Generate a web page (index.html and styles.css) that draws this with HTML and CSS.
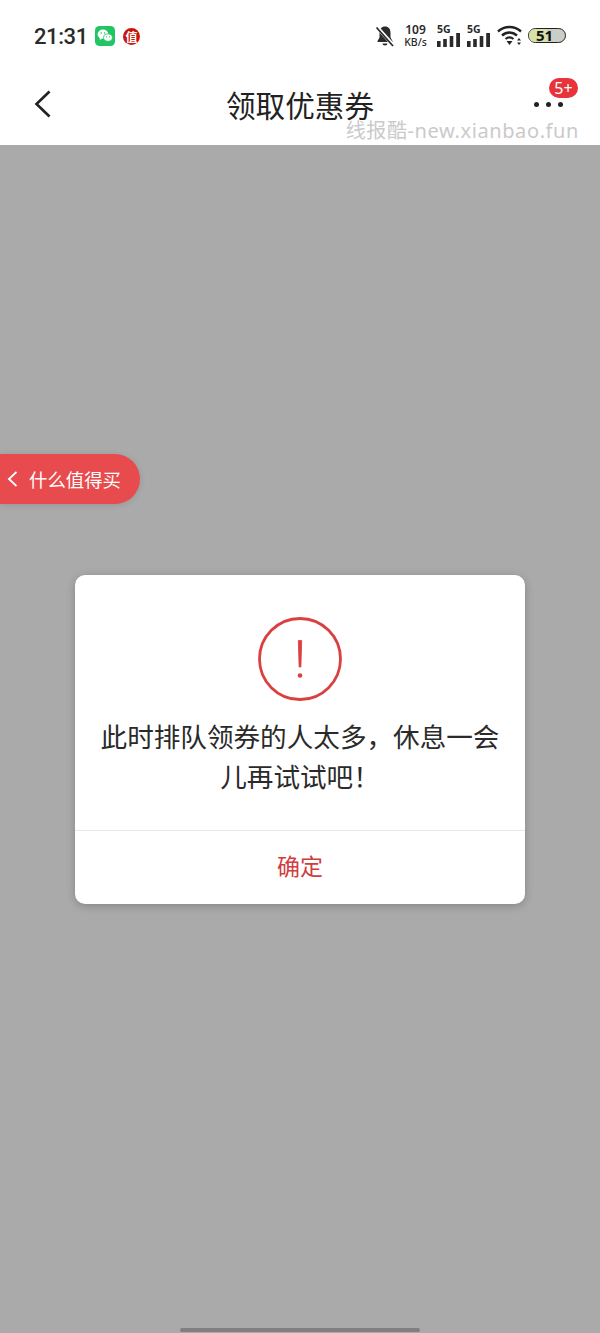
FILE: index.html
```html
<!DOCTYPE html>
<html lang="zh">
<head>
<meta charset="utf-8">
<title>领取优惠券</title>
<link rel="stylesheet" href="styles.css">
</head>
<body>
<div class="page">
  <header class="top">
    <div class="status">
      <div class="status-left">
        <span class="time">21:31</span>
        <svg class="wechat" width="20" height="20" viewBox="0 0 20 20">
          <rect width="20" height="20" rx="4.5" fill="#22c564"/>
          <ellipse cx="8" cy="8.2" rx="5.4" ry="4.6" fill="#fff"/>
          <path d="M5 11.5 4.6 14l2.600-1.600z" fill="#fff"/>
          <ellipse cx="13" cy="11.6" rx="4.4" ry="3.7" fill="#fff" stroke="#22c564" stroke-width=".8"/>
          <circle cx="6.2" cy="7" r=".8" fill="#22c564"/>
          <circle cx="9.6" cy="7" r=".8" fill="#22c564"/>
          <circle cx="11.6" cy="10.8" r=".6" fill="#22c564"/>
          <circle cx="14.4" cy="10.8" r=".6" fill="#22c564"/>
        </svg>
        <span class="zhi">值</span>
      </div>
      <div class="status-right">
        <svg class="bell" width="20" height="22" viewBox="0 0 20 22">
          <path d="M10 1.500c-3.600 0-5.500 2.600-5.500 6v5L2.500 16v1h15v-1l-2-3.500v-5c0-3.400-1.900-6-5.500-6z" fill="#2a2a2a"/>
          <path d="M7.500 18.500h5a2.500 2 0 0 1-5 0z" fill="#2a2a2a"/>
          <path d="M1.500 1.500 18 20" stroke="#fff" stroke-width="3.500"/>
          <path d="M1.500 2.500 18 21" stroke="#2a2a2a" stroke-width="1.800"/>
        </svg>
        <span class="speed"><b>109</b><b>KB/s</b></span>
        <span class="net">
          <i class="five">5G</i>
          <svg width="23" height="14" viewBox="0 0 23 14"><path d="M0 8h3.600v6H0zM6.200 6h3.600v8H6.200zM12.700 3h3.600v11h-3.600zM19.200 0h3.800v14h-3.800z" fill="#2a2a2a"/></svg>
        </span>
        <span class="net">
          <i class="five">5G</i>
          <svg width="23" height="14" viewBox="0 0 23 14"><path d="M0 8h3.600v6H0zM6.200 6h3.600v8H6.200zM12.700 3h3.600v11h-3.600zM19.200 0h3.800v14h-3.800z" fill="#2a2a2a"/></svg>
        </span>
        <svg class="wifi" width="25" height="21" viewBox="0 0 25 21">
          <path d="M1 6.500C7.500 .5 17.500 .5 24 6.500" fill="none" stroke="#222" stroke-width="2.400"/>
          <path d="M5 10.500c4.500-4 10.500-4 15 0" fill="none" stroke="#222" stroke-width="2.400"/>
          <path d="M8.500 14c2.500-2 5.500-2 8 0" fill="none" stroke="#222" stroke-width="2.200"/>
          <path d="M9.500 16h6l-3 4z" fill="#222"/>
          <path d="M20 15.500l2-2.500 2 2.500zM20 17.500l2 2.500 2-2.500z" fill="#222"/>
        </svg>
        <span class="battery"><span class="battery-level"></span><span class="battery-num">51</span></span>
      </div>
    </div>
    <div class="nav">
      <svg class="back" width="18" height="28" viewBox="0 0 18 28"><path d="M15.500 1.500 2.500 14l13 12.500" fill="none" stroke="#222" stroke-width="2.600"/></svg>
      <h1 class="title">领取优惠券</h1>
      <div class="more">
        <i></i><i></i><i></i>
        <span class="badge">5+</span>
      </div>
      <span class="mark">线报酷-new.xianbao.fun</span>
    </div>
  </header>
  <main class="body">
    <div class="float-tab">
      <svg width="11" height="16" viewBox="0 0 11 16"><path d="M10.500 1 3 8l7.500 7" fill="none" stroke="#fff" stroke-width="1.900"/></svg>
      <span>什么值得买</span>
    </div>
    <section class="dialog">
      <div class="dialog-main">
        <svg class="warn" width="84" height="84" viewBox="0 0 84 84">
          <circle cx="42" cy="42" r="40.500" fill="none" stroke="#d9403f" stroke-width="2.800"/>
          <path d="M40.300 23.500h3.400L42.900 50h-1.800z" fill="#d9403f" stroke="#d9403f" stroke-width=".8" stroke-linejoin="round"/>
          <circle cx="42" cy="58.500" r="2.300" fill="#d9403f"/>
        </svg>
        <p class="msg">此时排队领券的人太多，休息一会儿再试试吧！</p>
      </div>
      <div class="dialog-btn">确定</div>
    </section>
    <div class="home-bar"></div>
  </main>
</div>
</body>
</html>
```
FILE: styles.css
```css
* { box-sizing: border-box; }
html, body { margin: 0; padding: 0; }
body {
  width: 600px;
  height: 1333px;
  overflow: hidden;
  font-family: "Noto Sans CJK SC", "Noto Sans", sans-serif;
  background: #aaaaaa;
  color: #222;
}
.page { display: flex; flex-direction: column; height: 1333px; }
.top { background: #fff; height: 145px; flex: none; }
.status {
  height: 70px;
  padding: 0 34px 0 34px;
  display: flex;
  align-items: center;
  justify-content: space-between;
}
.status-left, .status-right { display: flex; align-items: center; }
.time { font: 500 22px/1 "Roboto", sans-serif; color: #2a2a2a; width: 53px; margin-top: 3px; letter-spacing: -.4px; white-space: nowrap; }
.wechat { margin-left: 8px; margin-top: 1px; }
.zhi {
  margin-left: 8px;
  margin-top: 2px;
  width: 17px; height: 17px;
  border-radius: 50%;
  background: #c8160f;
  color: #fff;
  font-size: 12px;
  line-height: 17px;
  text-align: center;
  font-weight: 700;
}
.bell { margin-right: 8px; margin-top: 1px; }
.speed { display: flex; flex-direction: column; align-items: center; width: 25px; margin-right: 9px; margin-top: 1px; }
.speed b { font: 600 12px/12px "Noto Sans", sans-serif; color: #2a2a2a; white-space: nowrap; }
.speed b + b { font-size: 10.500px; font-weight: 500; line-height: 12px; }
.net { position: relative; display: block; width: 23px; height: 22px; margin-right: 7px; margin-top: 1px; padding-top: 8px; }
.net svg { display: block; }
.five { position: absolute; left: 0; top: -1px; font: 700 10.500px/11px "Noto Sans", sans-serif; color: #2a2a2a; }
.wifi { margin: 0 6px 0 0; }
.battery {
  position: relative;
  width: 38px; height: 15px;
  border: 1.500px solid #222;
  border-radius: 8px;
  background: #c9cec6;
  display: block;
}
.battery-level { position: absolute; left: 0; top: 0; bottom: 0; width: 18px; border-radius: 6px 0 0 6px; background: #d8e2a8; }
.battery-num {
  position: absolute; left: 7px; top: 0;
  font: 700 15px/12px "Noto Sans", sans-serif;
  color: #111;
}
.nav { position: relative; height: 75px; display: flex; align-items: center; justify-content: center; padding-bottom: 6px; }
.back { position: absolute; left: 34px; top: 20px; }
.title { margin: 0; font-size: 29.600px; font-weight: 400; line-height: 40px; color: #222; }
.more { position: absolute; left: 534px; top: 32px; display: flex; gap: 7px; }
.more i { display: block; width: 5px; height: 5px; border-radius: 50%; background: #222; }
.badge {
  position: absolute; left: 15px; top: -24px;
  width: 29px; height: 20px;
  border-radius: 10px;
  background: #e8333a;
  color: #fff;
  font: 400 16px/20px "Noto Sans", sans-serif;
  text-align: center;
}
.mark {
  position: absolute; right: 21px; top: 49px;
  font: 400 20px/24px "Noto Sans", "Noto Sans CJK SC", sans-serif;
  color: #cacaca;
  letter-spacing: .6px;
  white-space: nowrap;
}
.body { position: relative; flex: 1; display: flex; flex-direction: column; align-items: center; padding-top: 430px; }
.float-tab {
  position: absolute; left: 0; top: 309px;
  width: 140px; height: 50px;
  border-radius: 0 25px 25px 0;
  background: #e84b4d;
  box-shadow: 0 1px 6px rgba(0,0,0,.12);
  color: #fff;
  display: flex; align-items: center;
  padding-left: 6px;
  gap: 12px;
  font-size: 18.400px;
}
.dialog {
  width: 450px; height: 329px;
  border-radius: 10px;
  background: #fff;
  box-shadow: 0 2px 8px rgba(0,0,0,.22);
  display: flex; flex-direction: column;
}
.dialog-main {
  flex: 1;
  display: flex; flex-direction: column; align-items: center;
  padding: 42px 25px 0;
}
.warn { display: block; flex: none; }
.msg {
  margin: 15px 0 0;
  font-size: 26.600px;
  line-height: 40px;
  font-weight: 400;
  color: #2a2a2a;
  text-align: center;
}
.dialog-btn {
  height: 74px; flex: none;
  border-top: 1.500px solid #e6e6e6;
  color: #cf3d40;
  font-size: 23px;
  line-height: 68px;
  text-align: center;
}
.home-bar {
  position: absolute; left: 180px; bottom: 1px;
  width: 240px; height: 4px;
  border-radius: 2px;
  background: #808080;
}
```
